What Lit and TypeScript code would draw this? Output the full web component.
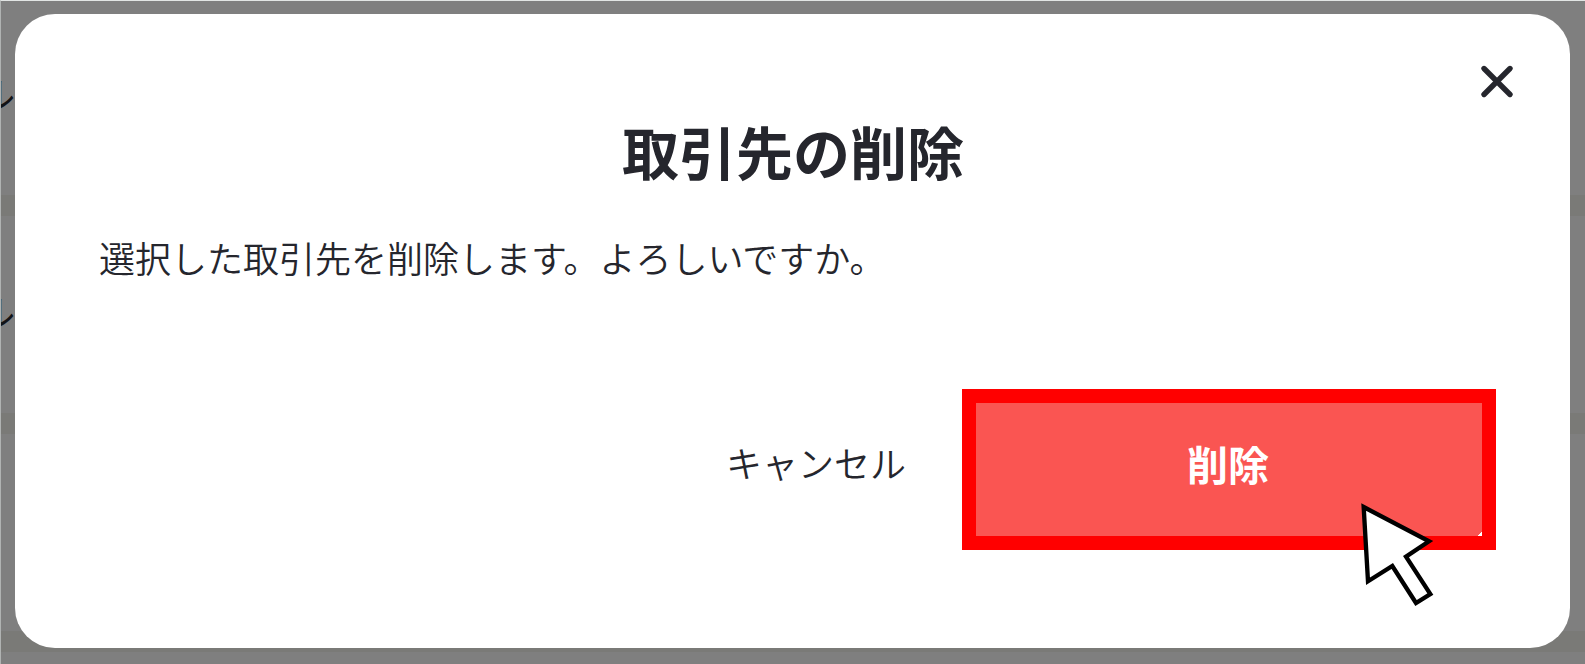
import { LitElement, html, css } from "lit";
import { customElement } from "lit/decorators.js";

@customElement("partner-list")
export class PartnerList extends LitElement {
  static styles = css`
    :host {
      display: block;
      overflow: hidden;
      background: #ffffff;
      color: #25262d;
    }
    .rows {
      list-style: none;
      margin: 0;
      padding: 0;
    }
    .row {
      box-sizing: border-box;
      height: 218px;
      display: flex;
      align-items: flex-start;
      padding-top: 66px;
      background: #ffffff;
      border-bottom: 21px solid #f5f5ef;
    }
    .row:first-child {
      height: 216px;
      padding-top: 64px;
    }
    .name {
      display: flex;
      justify-content: flex-end;
      width: 15px;
      overflow: hidden;
      font-size: 36px;
      line-height: 56px;
    }
  `;

  render() {
    return html`
      <ul class="rows">
        <li class="row"><span class="name">ル</span></li>
        <li class="row"><span class="name">ル</span></li>
        <li class="row"></li>
        <li class="row"></li>
      </ul>
    `;
  }
}

@customElement("confirm-dialog")
export class ConfirmDialog extends LitElement {
  static styles = css`
    :host {
      display: flex;
      flex-direction: column;
      box-sizing: border-box;
      background: #ffffff;
      border-radius: 40px;
      padding: 43px 49px 98px 84px;
      color: #25262d;
    }
    button {
      font-family: inherit;
      color: inherit;
      margin: 0;
      padding: 0;
      border: 0;
      background: none;
      cursor: pointer;
    }
    .close {
      align-self: flex-end;
      width: 48px;
      height: 48px;
    }
    .close svg {
      display: block;
    }
    .title {
      margin: 5px 0 0;
      padding-right: 34px;
      text-align: center;
      font-size: 57px;
      line-height: 80px;
      font-weight: 700;
    }
    .message {
      margin: 39px 0 0;
      font-size: 36px;
      line-height: 56px;
      font-weight: 350;
    }
    .actions {
      display: flex;
      justify-content: flex-end;
      align-items: center;
      gap: 56px;
      margin-top: auto;
      padding-right: 25px;
    }
    .cancel {
      font-size: 36px;
      line-height: 56px;
      font-weight: 350;
      padding-bottom: 16px;
    }
    .target {
      position: relative;
      width: 534px;
      background: #ffffff;
    }
    .delete {
      display: block;
      width: 100%;
      height: 161px;
      border: 14px solid #ff0000;
      padding: 0 2px 14px 0;
      background: linear-gradient(135deg, #fa5552 calc(100% - 3px), #ffffff calc(100% - 3px)) padding-box;
      color: #ffffff;
      font-size: 41px;
      line-height: 56px;
      font-weight: 700;
    }
    .pointer {
      position: absolute;
      top: 113px;
      right: 61px;
      pointer-events: none;
    }
  `;

  render() {
    return html`
      <button class="close" type="button" aria-label="閉じる">
        <svg width="48" height="48" viewBox="0 0 48 48" aria-hidden="true">
          <path d="M11 11.5L37 37.5M37 11.5L11 37.5" fill="none" stroke="#25262d" stroke-width="5.4" stroke-linecap="round" />
        </svg>
      </button>
      <h1 class="title">取引先の削除</h1>
      <p class="message">選択した取引先を削除します。よろしいですか。</p>
      <div class="actions">
        <button class="cancel" type="button">キャンセル</button>
        <div class="target">
          <button class="delete" type="button">削除</button>
          <svg class="pointer" width="75" height="105" viewBox="60 35 225 315" aria-hidden="true">
            <path
              d="M71 50L267 153L198 199L271 311L228 338L157 227L84 273Z"
              fill="#ffffff"
              stroke="#000000"
              stroke-width="13"
              stroke-linejoin="miter"
            />
          </svg>
        </div>
      </div>
    `;
  }
}

@customElement("app-root")
export class AppRoot extends LitElement {
  static styles = css`
    :host {
      display: grid;
      grid-template: minmax(0, 1fr) / minmax(0, 1fr);
      height: 100vh;
      overflow: hidden;
      font-family: "Noto Sans CJK JP", sans-serif;
    }
    .list,
    .backdrop {
      grid-area: 1 / 1;
    }
    .backdrop {
      z-index: 1;
      display: grid;
      box-sizing: border-box;
      padding: 13px 15px 16px 14px;
      border-top: 1px solid #e2e5e4;
      border-left: 1px solid #b0b3b2;
      background: rgba(0, 0, 0, 0.5) padding-box;
    }
  `;

  render() {
    return html`
      <partner-list class="list"></partner-list>
      <div class="backdrop">
        <confirm-dialog role="dialog" aria-modal="true" aria-label="取引先の削除"></confirm-dialog>
      </div>
    `;
  }
}
